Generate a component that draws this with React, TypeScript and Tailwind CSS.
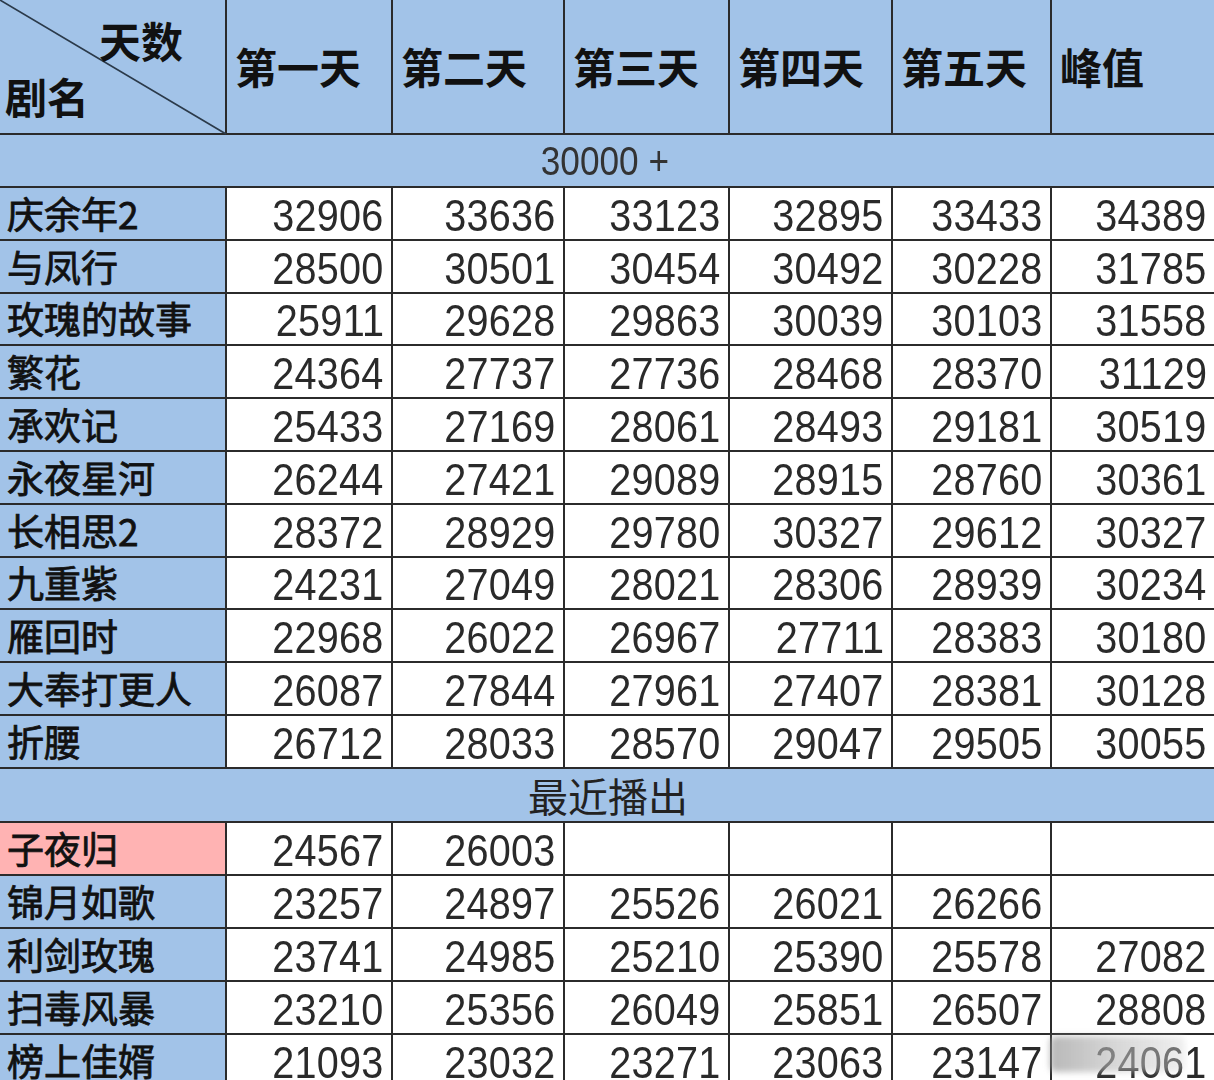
import React from "react";

const cols = ["第一天", "第二天", "第三天", "第四天", "第五天", "峰值"];

type Row = { name: string; vals: (number | null)[]; pink?: boolean };

const top: Row[] = [
  { name: "庆余年2", vals: [32906, 33636, 33123, 32895, 33433, 34389] },
  { name: "与凤行", vals: [28500, 30501, 30454, 30492, 30228, 31785] },
  { name: "玫瑰的故事", vals: [25911, 29628, 29863, 30039, 30103, 31558] },
  { name: "繁花", vals: [24364, 27737, 27736, 28468, 28370, 31129] },
  { name: "承欢记", vals: [25433, 27169, 28061, 28493, 29181, 30519] },
  { name: "永夜星河", vals: [26244, 27421, 29089, 28915, 28760, 30361] },
  { name: "长相思2", vals: [28372, 28929, 29780, 30327, 29612, 30327] },
  { name: "九重紫", vals: [24231, 27049, 28021, 28306, 28939, 30234] },
  { name: "雁回时", vals: [22968, 26022, 26967, 27711, 28383, 30180] },
  { name: "大奉打更人", vals: [26087, 27844, 27961, 27407, 28381, 30128] },
  { name: "折腰", vals: [26712, 28033, 28570, 29047, 29505, 30055] },
];

const recent: Row[] = [
  { name: "子夜归", vals: [24567, 26003, null, null, null, null], pink: true },
  { name: "锦月如歌", vals: [23257, 24897, 25526, 26021, 26266, null] },
  { name: "利剑玫瑰", vals: [23741, 24985, 25210, 25390, 25578, 27082] },
  { name: "扫毒风暴", vals: [23210, 25356, 26049, 25851, 26507, 28808] },
  { name: "榜上佳婿", vals: [21093, 23032, 23271, 23063, 23147, 24061] },
];

const cjk = { fontFamily: '"Noto Sans CJK SC", "Noto Sans", sans-serif' };
const num = {
  fontFamily: '"Liberation Sans", Arial, sans-serif',
};

function DataRows({ rows, h }: { rows: Row[]; h: string }) {
  return (
    <>
      {rows.map((r) => (
        <React.Fragment key={r.name}>
          <div
            className={`${h} ${r.pink ? "bg-[#ffb3b3]" : "bg-[#a2c3e8]"} border-b-2 border-r-2 border-[#2b2b2b] flex items-center pl-[7px] text-[37px] text-[#111] leading-none whitespace-nowrap [-webkit-text-stroke:0.8px_#111]`}
            style={cjk}
          >
            {r.name}
          </div>
          {r.vals.map((v, i) => (
            <div
              key={i}
              className={`${h} bg-white border-b-2 ${i < 5 ? "border-r-2" : ""} border-[#2b2b2b] flex items-center justify-end pr-[7px] pt-[4px] text-[#2a2a2a] leading-none`}
              style={num}
            >
              <span className="inline-block origin-right scale-x-[0.88] text-[45px] font-normal tracking-[0.3px]">
                {v ?? ""}
              </span>
            </div>
          ))}
        </React.Fragment>
      ))}
    </>
  );
}

export default function App() {
  return (
    <div className="relative w-[1214px] h-[1080px] overflow-hidden bg-white">
      <div className="grid grid-cols-[227px_166px_172px_165px_163px_159px_162px]">
        {/* header */}
        <div className="relative h-[135px] bg-[#a2c3e8] border-b-2 border-r-2 border-[#2b2b2b]" style={cjk}>
          <svg className="absolute inset-0" width="227" height="135" viewBox="0 0 227 135">
            <line x1="0" y1="0" x2="226" y2="134" stroke="#2b3a4a" strokeWidth="1.6" />
          </svg>
          <span className="absolute left-[99px] top-[19px] text-[42px] font-bold leading-none text-[#111]">天数</span>
          <span className="absolute left-[5px] top-[75px] text-[42px] font-bold leading-none text-[#111]">剧名</span>
        </div>
        {cols.map((c, i) => (
          <div
            key={c}
            className={`h-[135px] bg-[#a2c3e8] border-b-2 ${i < 5 ? "border-r-2" : ""} border-[#2b2b2b] flex items-center pl-[8px] pb-[2px] text-[42px] font-bold leading-none text-[#111] whitespace-nowrap`}
            style={cjk}
          >
            {c}
          </div>
        ))}

        {/* section 1 */}
        <div
          className="col-span-7 h-[53px] bg-[#a2c3e8] border-b-2 border-[#2b2b2b] flex items-center justify-center pr-[4px] text-[#333] leading-none"
          style={num}
        >
          <span className="inline-block scale-x-[0.88] text-[40px]">30000 +</span>
        </div>
        <DataRows rows={top} h="h-[52.8px]" />

        {/* section 2 */}
        <div
          className="col-span-7 h-[54px] bg-[#a2c3e8] border-b-2 border-[#2b2b2b] flex items-center justify-center pl-[2px] text-[40px] text-[#222] leading-none"
          style={cjk}
        >
          最近播出
        </div>
        <DataRows rows={recent} h="h-[53px]" />
      </div>

      {/* watermark */}
      <div className="absolute left-[1050px] top-[1036px] w-[135px] h-[36px] rounded-[6px] bg-gradient-to-r from-[#9a9a9a]/70 via-[#bdbdbd]/60 to-[#d8d8d8]/40 blur-[3px]" />
    </div>
  );
}
